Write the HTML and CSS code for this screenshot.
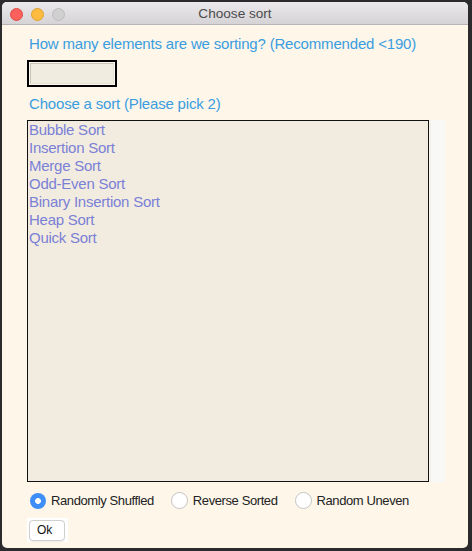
FILE: index.html
```html
<!DOCTYPE html>
<html>
<head>
<meta charset="utf-8">
<link rel="stylesheet" href="styles.css">
</head>
<body>
<div class="window">
  <div class="titlebar">
    <div class="lights">
      <span class="light red"></span>
      <span class="light yellow"></span>
      <span class="light gray"></span>
    </div>
    <div class="title">Choose sort</div>
  </div>
  <div class="content">
    <div class="label first">How many elements are we sorting? (Recommended &lt;190)</div>
    <div class="field"><div class="field-inner"></div></div>
    <div class="label second">Choose a sort (Please pick 2)</div>
    <div class="list-row">
      <div class="list">
        <div class="item">Bubble Sort</div>
        <div class="item">Insertion Sort</div>
        <div class="item">Merge Sort</div>
        <div class="item">Odd-Even Sort</div>
        <div class="item">Binary Insertion Sort</div>
        <div class="item">Heap Sort</div>
        <div class="item">Quick Sort</div>
      </div>
      <div class="track"></div>
    </div>
    <div class="radios">
      <div class="radio checked"><span class="dot"></span><span class="rlabel">Randomly Shuffled</span></div>
      <div class="radio"><span class="dot"></span><span class="rlabel">Reverse Sorted</span></div>
      <div class="radio"><span class="dot"></span><span class="rlabel">Random Uneven</span></div>
    </div>
    <div class="btn-wrap"><div class="btn">Ok</div></div>
  </div>
</div>
</body>
</html>
```
FILE: styles.css
```css
html, body {
  margin: 0;
  padding: 0;
  background: #2b2b2e;
  width: 472px;
  height: 551px;
  overflow: hidden;
}
body {
  font-family: "Liberation Sans", Arial, sans-serif;
}
.window {
  margin: 2px 4px 0 2px;
  width: 466px;
  height: 546px;
  background: #fdf6e9;
  border-radius: 5px;
  overflow: hidden;
  display: flex;
  flex-direction: column;
}
.titlebar {
  height: 22px;
  border-bottom: 1px solid #b6b4b6;
  background: linear-gradient(#ebe9eb, #d5d3d5);
  position: relative;
  display: flex;
  align-items: center;
  justify-content: center;
}
.lights {
  position: absolute;
  left: 8px;
  top: 6px;
  display: flex;
  gap: 8px;
}
.light {
  width: 11px;
  height: 11px;
  border-radius: 50%;
  display: block;
}
.red { background: #fc605c; border: 0.5px solid #de4c45; }
.yellow { background: #fdbc40; border: 0.5px solid #dfa131; }
.gray { background: #d1d0d1; border: 0.5px solid #bdbcbd; }
.title {
  font-size: 13.6px;
  color: #4b4b4b;
}
.content {
  padding-left: 25px;
  display: flex;
  flex-direction: column;
  align-items: flex-start;
}
.label {
  font-size: 15px;
  line-height: 18px;
  color: #3a9de0;
  padding-left: 2px;
  letter-spacing: -0.18px;
}
.label.first { margin-top: 10px; }
.label.second { margin-top: 8px; }
.field {
  margin-top: 7px;
  width: 86px;
  height: 23px;
  border: 2px solid #000;
  background: #fdf6e9;
}
.field-inner {
  margin: 1px;
  height: 19px;
  border: 1px solid #c9c5bb;
  border-right-color: #e6e2d8;
  border-bottom-color: #e6e2d8;
  background: #f1ece0;
}
.list-row {
  margin-top: 7px;
  display: flex;
  gap: 1px;
}
.list {
  width: 400px;
  height: 360px;
  border: 1px solid #111;
  background: #f2ece0;
}
.item {
  font-size: 15px;
  line-height: 18px;
  color: #7a80d6;
  padding-left: 1px;
  letter-spacing: -0.25px;
}
.track {
  width: 14px;
  height: 362px;
  background: #f8f8f7;
  border-left: 1px solid #eeeeec;
}
.radios {
  margin-top: 10px;
  display: flex;
  align-items: center;
  padding-left: 3px;
}
.radio {
  display: flex;
  align-items: center;
  margin-right: 17px;
}
.dot {
  width: 15px;
  height: 15px;
  border-radius: 50%;
  background: #fff;
  border: 1px solid #c4c4c4;
  box-sizing: content-box;
  display: block;
}
.radio.checked .dot {
  width: 16px;
  height: 16px;
  border: none;
  background: radial-gradient(circle, #fff 0 2.6px, #3d8ef6 3.2px);
}
.rlabel {
  font-size: 13px;
  color: #222;
  margin-left: 5px;
  letter-spacing: -0.4px;
}
.btn-wrap {
  margin-top: 9px;
  background: #fff;
  padding: 2px 3px 1px 2px;
}
.btn {
  width: 34px;
  height: 19px;
  border: 1px solid #cfcfcf;
  border-radius: 4px;
  background: #fff;
  font-size: 12px;
  line-height: 19px;
  color: #111;
  box-sizing: content-box;
  text-indent: 7px;
  box-shadow: 0 0.5px 1px rgba(0,0,0,0.08);
}
```
